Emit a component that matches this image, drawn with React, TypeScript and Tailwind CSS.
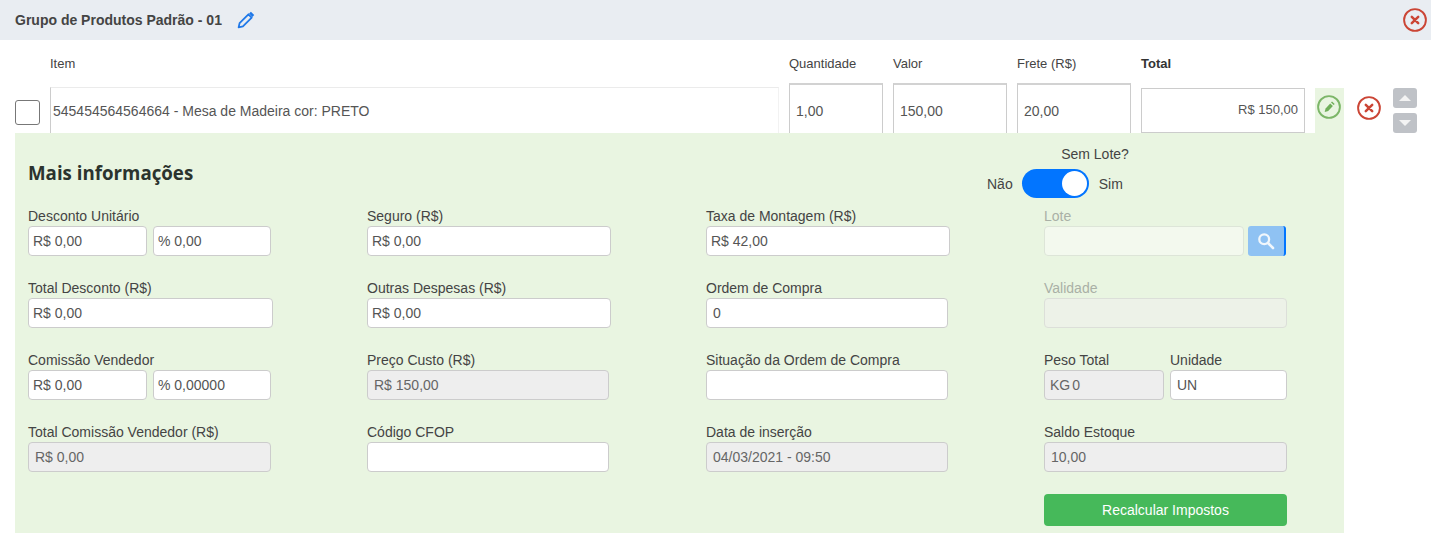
import type { ReactNode } from 'react';

const font = "font-['Liberation_Sans',Arial,sans-serif]";

function CloseIcon({ size }: { size: number }) {
  return (
    <svg width={size} height={size} viewBox="0 0 24 24" fill="none" stroke="#cb4535" className="block">
      <circle cx="12" cy="12" r="10.9" strokeWidth="1.9" />
      <path d="M8.8 8.8l6.4 6.4M15.2 8.8l-6.4 6.4" strokeWidth="2.5" strokeLinecap="round" />
    </svg>
  );
}

function PencilOutline() {
  return (
    <svg width="18" height="18" viewBox="0 0 18 18" fill="none" stroke="#1f78e8" strokeWidth="1.8" className="block">
      <path d="M1.6 16.4l1-4.3L11.4 3.3l3.3 3.3-8.8 8.8-4.3 1z" strokeLinejoin="round" />
      <path d="M13 1.7l3.3 3.3" strokeWidth="2.6" />
    </svg>
  );
}

function GreenEdit() {
  return (
    <svg width="24" height="24" viewBox="0 0 24 24" fill="none" className="block">
      <circle cx="12" cy="12" r="10.9" stroke="#7cb668" strokeWidth="1.9" />
      <path d="M7.6 17l1-3.6 4.6-5 2.7 2.6-4.7 5-3.6 1z" fill="#6fae59" />
      <path d="M14 7.5l1-1.1 2.7 2.6-1 1.1z" fill="#6fae59" />
    </svg>
  );
}

function SearchIcon() {
  return (
    <svg width="18" height="18" viewBox="0 0 18 18" fill="none" stroke="#f1f7fc" className="block">
      <circle cx="7.2" cy="7.2" r="4.9" strokeWidth="2.3" />
      <path d="M11 11l5 5" strokeWidth="2.6" strokeLinecap="round" />
    </svg>
  );
}

function Arrow({ up }: { up?: boolean }) {
  return (
    <button className="w-6 h-5 rounded-[3px] bg-[#bfc2c7] flex items-center justify-center">
      <span
        className={
          up
            ? 'w-0 h-0 border-x-[6px] border-x-transparent border-b-[6px] border-b-[#f3f3f3]'
            : 'w-0 h-0 border-x-[6px] border-x-transparent border-t-[6px] border-t-[#f3f3f3]'
        }
      />
    </button>
  );
}

function Input({ value, width, disabled, pad = 'px-[4px]' }: { value?: ReactNode; width: string; disabled?: boolean; pad?: string }) {
  return (
    <div
      className={`${width} ${pad} h-[30px] shrink-0 rounded-[4px] border border-[#ccc] flex items-center text-sm ${
        disabled ? 'bg-[#eee] text-[#666]' : 'bg-white text-[#555]'
      }`}
    >
      {value}
    </div>
  );
}

function Label({ children, muted }: { children: string; muted?: boolean }) {
  return <div className={`h-[20px] text-sm leading-[20px] ${muted ? 'text-[#a9b0a6]' : 'text-[#444]'}`}>{children}</div>;
}

function TopCell({ label, value, width }: { label: string; value: string; width: string }) {
  return (
    <div className={`${width} shrink-0`}>
      <div className="h-[43px] pt-[15px] text-[13px] leading-[17px] text-[#444]">{label}</div>
      <div className="h-[50px] border-x border-x-[#ccc] border-t-2 border-t-[#d2d2d2] bg-white flex items-center pt-[3px] px-[6px] text-sm text-[#555]">
        {value}
      </div>
    </div>
  );
}

export default function App() {
  return (
    <div className={`${font} w-[1431px] h-[533px] overflow-hidden bg-white`}>
      <div className="h-10 bg-[#e9edf2] flex items-center justify-between pl-[15px] pr-[4px]">
        <div className="flex items-center gap-[15px]">
          <span className="text-sm font-bold text-[#444]">Grupo de Produtos Padrão - 01</span>
          <PencilOutline />
        </div>
        <CloseIcon size={24} />
      </div>

      <div className="flex pl-[15px]">
        <div className="w-[25px] shrink-0 pt-[60px]">
          <div className="w-[25px] h-[25px] rounded-[3px] border border-[#777] bg-white" />
        </div>
        <div className="w-[729px] mx-[10px] shrink-0">
          <div className="h-[47px] pt-[15px] text-[13px] leading-[17px] text-[#444]">Item</div>
          <div className="h-[46px] border-l border-l-[#ccc] border-t border-t-[#ebebeb] border-r border-r-[#f2f2f2] flex items-center pl-[2px] text-sm text-[#555]">
            545454564564664 - Mesa de Madeira cor: PRETO
          </div>
        </div>
        <div className="flex gap-[10px] shrink-0">
          <TopCell label="Quantidade" value="1,00" width="w-[94px]" />
          <TopCell label="Valor" value="150,00" width="w-[114px]" />
          <TopCell label="Frete (R$)" value="20,00" width="w-[114px]" />
          <div className="w-[164px] shrink-0">
            <div className="h-[48px] pt-[15px] text-[13px] leading-[17px] font-bold text-[#333]">Total</div>
            <div className="h-[45px] border border-[#ccc] bg-white flex items-center justify-end pb-[2px] px-[6px] text-[13px] text-[#555]">
              R$ 150,00
            </div>
          </div>
        </div>
        <div className="w-[29px] ml-[10px] shrink-0 mt-[48px] h-[45px] bg-[#e9f5e1] pt-[7px] pl-[2px]">
          <GreenEdit />
        </div>
        <div className="ml-[13px] mt-[56px] shrink-0">
          <CloseIcon size={24} />
        </div>
        <div className="ml-[12px] mt-[48px] shrink-0 flex flex-col gap-[5px]">
          <Arrow up />
          <Arrow />
        </div>
      </div>

      <div className="ml-[15px] w-[1329px] h-[400px] bg-[#e9f5e1] pl-[13px]">
        <div className="flex h-[73px]">
          <h2 className="w-[959px] pt-[27px] font-['Open_Sans',sans-serif] text-[18.7px] leading-[25px] font-bold text-[#2b332e]">
            Mais informações
          </h2>
          <div className="w-[150px] pt-[12px]">
            <div className="text-center text-sm leading-[18px] text-[#444] pl-[66px]">Sem Lote?</div>
            <div className="flex items-center mt-[6px] text-sm text-[#444]">
              <span>Não</span>
              <div className="w-[67px] h-[29px] ml-[9px] mr-[10px] rounded-full bg-[#0275ff] flex items-center justify-end pr-[2px]">
                <div className="w-[25px] h-[25px] rounded-full bg-white" />
              </div>
              <span>Sim</span>
            </div>
          </div>
        </div>

        <div className="grid grid-cols-[339px_339px_338px_1fr] gap-y-[22px]">
          <div>
            <Label>Desconto Unitário</Label>
            <div className="flex gap-[6px]">
              <Input value="R$ 0,00" width="w-[119px]" />
              <Input value="% 0,00" width="w-[118px]" />
            </div>
          </div>
          <div>
            <Label>Seguro (R$)</Label>
            <Input value="R$ 0,00" width="w-[244px]" />
          </div>
          <div>
            <Label>Taxa de Montagem (R$)</Label>
            <Input value="R$ 42,00" width="w-[244px]" />
          </div>
          <div>
            <Label muted>Lote</Label>
            <div className="flex gap-[4px]">
              <div className="w-[200px] h-[30px] rounded-[4px] border border-[#dde5d8] bg-[#f3f9ee]" />
              <button className="w-[38px] h-[30px] rounded-[3px] bg-[#8fc2f3] border-r-2 border-[#0275ff] flex items-center justify-center">
                <SearchIcon />
              </button>
            </div>
          </div>

          <div>
            <Label>Total Desconto (R$)</Label>
            <Input value="R$ 0,00" width="w-[245px]" />
          </div>
          <div>
            <Label>Outras Despesas (R$)</Label>
            <Input value="R$ 0,00" width="w-[244px]" />
          </div>
          <div>
            <Label>Ordem de Compra</Label>
            <Input value="0" width="w-[242px]" pad="px-[6px]" />
          </div>
          <div>
            <Label muted>Validade</Label>
            <div className="w-[243px] h-[30px] rounded-[4px] border border-[#dcdfd9] bg-[#edf2e8]" />
          </div>

          <div>
            <Label>Comissão Vendedor</Label>
            <div className="flex gap-[6px]">
              <Input value="R$ 0,00" width="w-[119px]" />
              <Input value="% 0,00000" width="w-[118px]" />
            </div>
          </div>
          <div>
            <Label>Preço Custo (R$)</Label>
            <Input value="R$ 150,00" width="w-[242px]" disabled pad="px-[6px]" />
          </div>
          <div>
            <Label>Situação da Ordem de Compra</Label>
            <Input width="w-[242px]" />
          </div>
          <div className="flex gap-[6px]">
            <div>
              <Label>Peso Total</Label>
              <Input
                value={
                  <>
                    KG<span className="ml-[2px]">0</span>
                  </>
                }
                width="w-[120px]"
                disabled
                pad="px-[5px]"
              />
            </div>
            <div>
              <Label>Unidade</Label>
              <Input value="UN" width="w-[117px]" pad="px-[6px]" />
            </div>
          </div>

          <div>
            <Label>Total Comissão Vendedor (R$)</Label>
            <Input value="R$ 0,00" width="w-[243px]" disabled pad="px-[6px]" />
          </div>
          <div>
            <Label>Código CFOP</Label>
            <Input width="w-[242px]" />
          </div>
          <div>
            <Label>Data de inserção</Label>
            <Input value="04/03/2021 - 09:50" width="w-[242px]" disabled pad="px-[6px]" />
          </div>
          <div>
            <Label>Saldo Estoque</Label>
            <Input value="10,00" width="w-[243px]" disabled pad="px-[6px]" />
          </div>
        </div>

        <div className="flex justify-end pr-[57px] mt-[22px]">
          <button className="w-[243px] h-[32px] rounded-[4px] bg-[#46b95a] text-sm text-white">Recalcular Impostos</button>
        </div>
      </div>
    </div>
  );
}
